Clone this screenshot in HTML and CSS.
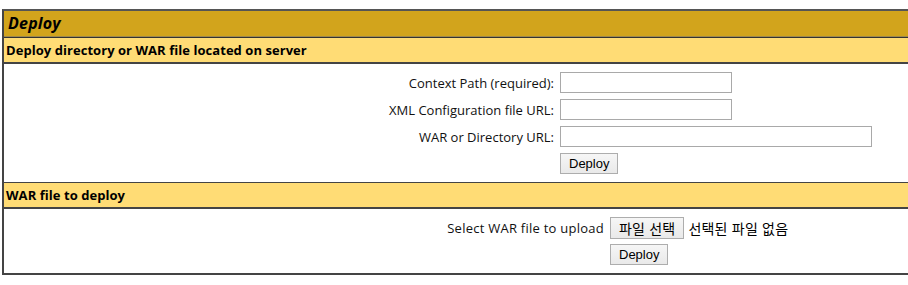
FILE: index.html
```html
<!DOCTYPE html>
<html lang="ko">
<head>
<meta charset="utf-8">
<title>Deploy</title>
<link rel="stylesheet" href="styles.css">
</head>
<body>
<div class="box">
  <div class="title">Deploy</div>
  <div class="header">Deploy directory or WAR file located on server</div>
  <div class="section">
    <form class="grid grid-server">
      <label class="lbl" for="p">Context Path (required):</label>
      <div class="cell"><input id="p" class="txt short" type="text"></div>
      <label class="lbl" for="c">XML Configuration file URL:</label>
      <div class="cell"><input id="c" class="txt short" type="text"></div>
      <label class="lbl" for="w">WAR or Directory URL:</label>
      <div class="cell"><input id="w" class="txt long" type="text"></div>
      <span class="lbl"></span>
      <div class="cell"><button type="button" class="btn">Deploy</button></div>
    </form>
  </div>
  <div class="header">WAR file to deploy</div>
  <div class="section">
    <form class="grid grid-upload">
      <span class="lbl wide">Select WAR file to upload</span>
      <div class="cell file"><button type="button" class="btn kr">파일 선택</button><span class="nofile">선택된 파일 없음</span></div>
      <span class="lbl"></span>
      <div class="cell"><button type="button" class="btn">Deploy</button></div>
    </form>
  </div>
</div>
</body>
</html>
```

FILE: styles.css
```css
html, body {
  margin: 0;
  padding: 0;
  overflow: hidden;
  background: #fff;
}
body {
  font-family: "Open Sans", "Noto Sans", "Noto Sans CJK KR", sans-serif;
  color: #000;
}
.box {
  margin: 9px 0 0 2px;
  width: 1250px;
  border: 2px solid #444;
  border-top-color: #555;
}
.title {
  background: #D2A41C;
  font-style: italic;
  font-weight: bold;
  font-size: 16px;
  height: 25px;
  line-height: 25px;
  padding-left: 4px;
  letter-spacing: 0.2px;
  border-bottom: 1px solid #a08a4a;
}
.header {
  background: #FFDC75;
  font-weight: bold;
  font-size: 13px;
  height: 24px;
  line-height: 24px;
  padding-left: 2px;
  letter-spacing: 0.05px;
  border-top: 1px solid #333;
  border-bottom: 2px solid #444;
}
.section + .header {
  border-top: 1px solid #444;
}
.section {
  padding: 5px 0 5px;
}
.grid {
  display: grid;
  grid-auto-rows: 27px;
  column-gap: 6px;
  margin: 0;
}
.grid-server {
  grid-template-columns: 200px auto;
  padding-left: 350px;
}
.grid-upload {
  grid-template-columns: 200px auto;
  padding-left: 400px;
}
.lbl {
  font-size: 13px;
  text-align: right;
  align-self: center;
  color: #111;
}
.lbl.wide {
  letter-spacing: 0.25px;
}
.cell {
  display: flex;
  align-items: center;
}
.txt {
  box-sizing: border-box;
  height: 21px;
  border: 1px solid #a9a9a9;
  background: #fff;
  margin: 0;
  padding: 1px 2px;
}
.short { width: 172px; }
.long { width: 312px; }
.btn {
  box-sizing: border-box;
  height: 21px;
  padding: 0 8px;
  margin: 0;
  font-family: "Liberation Sans", Arial, sans-serif;
  font-size: 13px;
  color: #000;
  background: linear-gradient(#f6f6f6, #e9e9e9);
  border: 1px solid #adadad;
  border-radius: 0;
}
.btn.kr {
  height: 22px;
  font-family: "Noto Sans CJK KR", sans-serif;
  font-size: 14px;
  padding: 0 8px;
  letter-spacing: 0.2px;
}
.file {
  gap: 4px;
}
.nofile {
  font-family: "Noto Sans CJK KR", sans-serif;
  font-size: 14px;
  letter-spacing: 0.2px;
}
```
